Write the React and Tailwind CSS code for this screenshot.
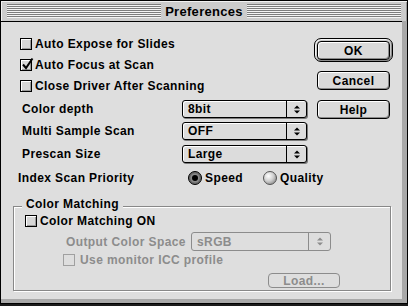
import React from "react";

function Check({ checked = false, disabled = false }) {
  return (
    <span
      className={
        disabled
          ? "relative block h-[12px] w-[12px] shrink-0 border border-[#a0a0a0] bg-[#dedede]"
          : "relative block h-[12px] w-[12px] shrink-0 border border-black bg-[#d6d6d6] shadow-[inset_1px_1px_0_#fff,inset_-1px_-1px_0_#9a9a9a]"
      }
    >
      {checked && (
        <svg className="absolute left-[0px] top-[-3px]" width="14" height="14" viewBox="0 0 14 14">
          <path d="M2 7.5 L5 11 L11.5 1.5" fill="none" stroke="#000" strokeWidth="2" />
        </svg>
      )}
    </span>
  );
}

function Arrows({ color = "#000" }) {
  return (
    <svg width="6" height="9" viewBox="0 0 6 9">
      <path d="M0 3.5 L3 0.5 L6 3.5 Z" fill={color} />
      <path d="M0 5.5 L3 8.5 L6 5.5 Z" fill={color} />
    </svg>
  );
}

function Popup({ value }) {
  return (
    <div className="flex h-[18px] w-[125px] shrink-0 items-stretch rounded-[3px] border border-black bg-[#dcdcdc] shadow-[1px_1px_0_#7a7a7a,inset_1px_1px_0_#fff]">
      <span className="flex flex-1 items-center pl-[5px] leading-none">{value}</span>
      <span className="flex w-[20px] items-center justify-center border-l border-black">
        <Arrows />
      </span>
    </div>
  );
}

function Button({ children, className = "" }) {
  return (
    <div
      className={
        "flex h-[19px] w-[73px] items-center justify-center rounded-[4px] border border-black bg-[#dadada] leading-none shadow-[inset_1px_1px_0_#fff,inset_-1px_-1px_0_#8a8a8a] " +
        className
      }
    >
      {children}
    </div>
  );
}

function RadioOn() {
  return (
    <svg width="14" height="14" viewBox="0 0 14 14">
      <circle cx="7" cy="7" r="6.5" fill="#6a6a6a" stroke="#000" />
      <circle cx="7" cy="7" r="4.6" fill="#8a8a8a" />
      <circle cx="7" cy="7" r="3" fill="#000" />
    </svg>
  );
}

function RadioOff() {
  return (
    <svg width="14" height="14" viewBox="0 0 14 14">
      <defs>
        <radialGradient id="rg" cx="38%" cy="35%" r="70%">
          <stop offset="0" stopColor="#ffffff" />
          <stop offset="0.55" stopColor="#cfcfcf" />
          <stop offset="1" stopColor="#8c8c8c" />
        </radialGradient>
      </defs>
      <circle cx="7" cy="7" r="6.5" fill="url(#rg)" stroke="#555" />
    </svg>
  );
}

export default function App() {
  return (
    <div className="h-[306px] w-[408px] overflow-hidden bg-[#1b1b1b] font-['Liberation_Sans',Arial,sans-serif] text-[12px] font-bold tracking-[0.4px] text-black">
      <div className="h-[304px] w-[408px] border border-black bg-[#a9a9a9]">
        {/* title bar */}
        <div className="flex h-[20px] items-stretch bg-[#cccccc] pb-[3px] pl-[6px] pr-[6px] pt-[3px] shadow-[inset_1px_1px_0_#f2f2f2,inset_-1px_0_0_#999]">
          <div className="flex-1 bg-[repeating-linear-gradient(to_bottom,#7d7d7d_0px,#7d7d7d_1px,#f4f4f4_1px,#f4f4f4_2px)]" />
          <div className="flex items-center px-[4px] text-[13px] leading-none tracking-[0.3px]">Preferences</div>
          <div className="flex-1 bg-[repeating-linear-gradient(to_bottom,#7d7d7d_0px,#7d7d7d_1px,#f4f4f4_1px,#f4f4f4_2px)]" />
        </div>

        {/* content */}
        <div className="h-[278px] w-[401px] border-t border-black bg-[#dedede]">
          <div className="flex">
            {/* left column */}
            <div className="flex w-[313px] shrink-0 flex-col pl-[17px] pt-[11px]">
              <div className="flex h-[21px] items-center gap-[3px] pl-[2px]">
                <Check />
                <span className="leading-none">Auto Expose for Slides</span>
              </div>
              <div className="flex h-[21px] items-center gap-[3px] pl-[2px]">
                <Check checked />
                <span className="leading-none">Auto Focus at Scan</span>
              </div>
              <div className="flex h-[21px] items-center gap-[3px] pl-[2px]">
                <Check />
                <span className="leading-none">Close Driver After Scanning</span>
              </div>

              <div className="mt-[4px] flex h-[18px] items-center pl-[4px]">
                <span className="w-[160px] shrink-0 leading-none">Color depth</span>
                <Popup value="8bit" />
              </div>
              <div className="mt-[4px] flex h-[18px] items-center pl-[4px]">
                <span className="w-[160px] shrink-0 leading-none">Multi Sample Scan</span>
                <Popup value="OFF" />
              </div>
              <div className="mt-[5px] flex h-[18px] items-center pl-[4px]">
                <span className="w-[160px] shrink-0 leading-none">Prescan Size</span>
                <Popup value="Large" />
              </div>

              <div className="mt-[8px] flex h-[14px] items-center">
                <span className="w-[170px] shrink-0 leading-none">Index Scan Priority</span>
                <div className="flex w-[75px] shrink-0 items-center gap-[3px]">
                  <RadioOn />
                  <span className="leading-none">Speed</span>
                </div>
                <div className="flex shrink-0 items-center gap-[3px]">
                  <RadioOff />
                  <span className="leading-none">Quality</span>
                </div>
              </div>
            </div>

            {/* right column */}
            <div className="flex flex-col pt-[16px]">
              <div className="h-[24px] w-[79px] rounded-[7px] border border-black bg-[#c8c8c8] p-[2px] shadow-[inset_1px_1px_0_#f4f4f4,inset_-1px_-1px_0_#8a8a8a]">
                <Button className="h-[18px] w-[73px]">OK</Button>
              </div>
              <Button className="ml-[3px] mt-[9px]">Cancel</Button>
              <Button className="ml-[3px] mt-[10px] h-[18px]">Help</Button>
            </div>
          </div>

          {/* group box */}
          <div className="relative ml-[12px] mt-[21px] h-[85px] w-[378px] border border-[#888] shadow-[1px_1px_0_#fff,inset_1px_1px_0_#fff]">
            <span className="absolute left-[8px] top-[-9px] bg-[#dedede] px-[4px] leading-none">Color Matching</span>
            <div className="flex flex-col pl-[11px] pt-[4px]">
              <div className="flex h-[20px] items-center gap-[3px]">
                <Check />
                <span className="leading-none">Color Matching ON</span>
              </div>
              <div className="mt-[1px] flex h-[19px] items-center pl-[41px] text-[#8c8c8c]">
                <span className="w-[125px] shrink-0 leading-none">Output Color Space</span>
                <div className="flex h-[19px] w-[140px] shrink-0 items-stretch rounded-[3px] border border-[#8c8c8c]">
                  <span className="flex flex-1 items-center pl-[5px] leading-none">sRGB</span>
                  <span className="flex w-[22px] items-center justify-center border-l border-[#8c8c8c]">
                    <Arrows color="#8c8c8c" />
                  </span>
                </div>
              </div>
              <div className="flex h-[18px] items-center gap-[5px] pl-[38px] text-[#8c8c8c]">
                <Check disabled />
                <span className="leading-none">Use monitor ICC profile</span>
              </div>
              <div className="mt-[4px] flex">
                <div className="ml-[243px] flex h-[15px] w-[72px] items-center justify-center rounded-[4px] border border-[#8c8c8c] leading-none text-[#8c8c8c]">
                  Load...
                </div>
              </div>
            </div>
          </div>
        </div>
      </div>
    </div>
  );
}
